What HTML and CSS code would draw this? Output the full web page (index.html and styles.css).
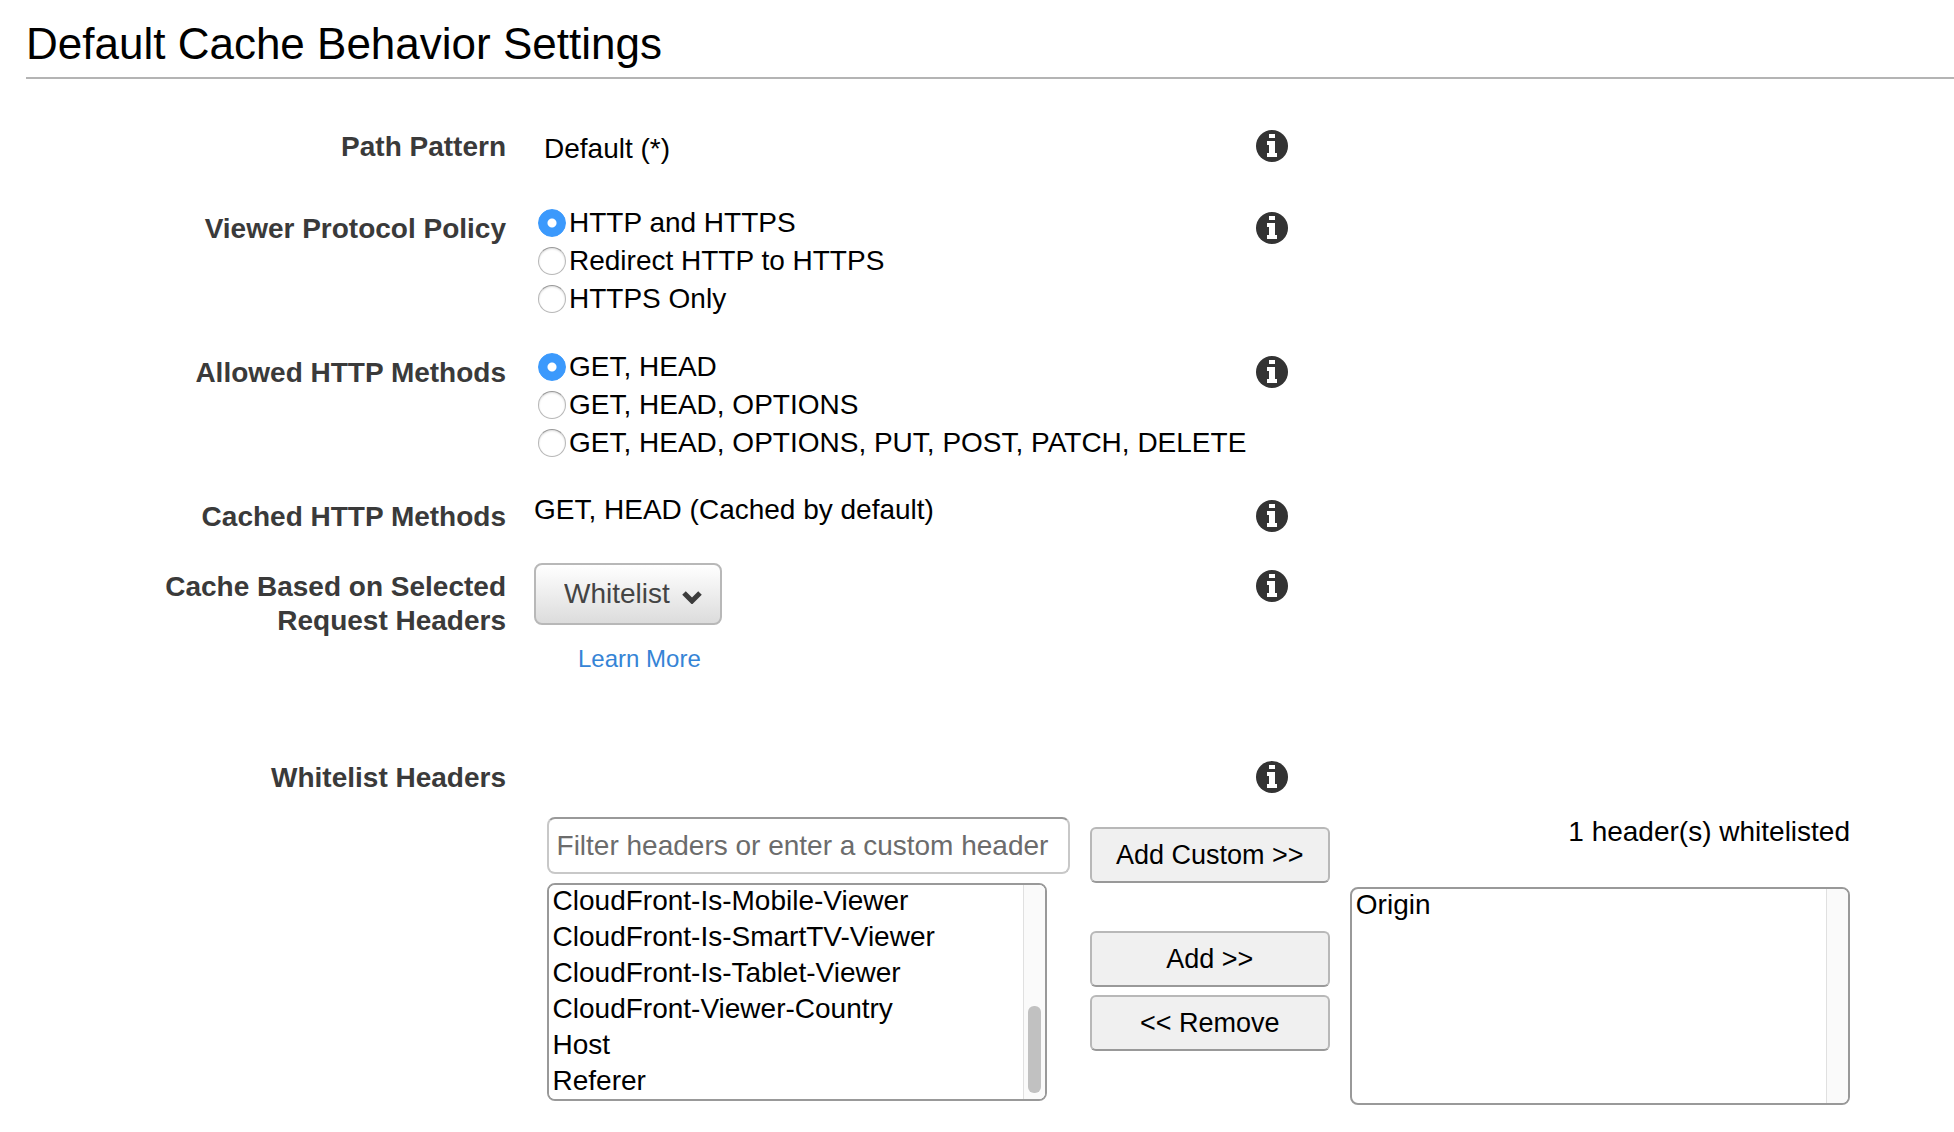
FILE: index.html
```html
<!DOCTYPE html>
<html lang="en">
<head>
<meta charset="utf-8">
<title>Default Cache Behavior Settings</title>
<link rel="stylesheet" href="styles.css">
</head>
<body>
<svg class="symbols" aria-hidden="true">
  <symbol id="info" viewBox="0 0 32 32">
    <circle cx="16" cy="16" r="16" fill="#333"/>
    <path fill="#fff" d="M13 4h6v4h-6zM11 11h8v12h2v4H11v-4h2v-8h-2z"/>
  </symbol>
</svg>
<main class="page">
  <h1 class="title">Default Cache Behavior Settings</h1>
  <form class="settings">
    <div class="row">
      <span class="label">Path Pattern</span>
      <p class="value value-inset">Default (*)</p>
      <button type="button" class="info" aria-label="About path pattern"><svg><use href="#info"/></svg></button>
    </div>
    <div class="row" role="radiogroup" aria-labelledby="viewer-policy">
      <span class="label" id="viewer-policy">Viewer Protocol Policy</span>
      <div class="choices">
        <label class="choice"><input type="radio" name="policy" checked>HTTP and HTTPS</label>
        <label class="choice"><input type="radio" name="policy">Redirect HTTP to HTTPS</label>
        <label class="choice"><input type="radio" name="policy">HTTPS Only</label>
      </div>
      <button type="button" class="info" aria-label="About viewer protocol policy"><svg><use href="#info"/></svg></button>
    </div>
    <div class="row" role="radiogroup" aria-labelledby="allowed-methods">
      <span class="label" id="allowed-methods">Allowed HTTP Methods</span>
      <div class="choices">
        <label class="choice"><input type="radio" name="methods" checked>GET, HEAD</label>
        <label class="choice"><input type="radio" name="methods">GET, HEAD, OPTIONS</label>
        <label class="choice"><input type="radio" name="methods">GET, HEAD, OPTIONS, PUT, POST, PATCH, DELETE</label>
      </div>
      <button type="button" class="info" aria-label="About allowed HTTP methods"><svg><use href="#info"/></svg></button>
    </div>
    <div class="row">
      <span class="label">Cached HTTP Methods</span>
      <p class="value">GET, HEAD (Cached by default)</p>
      <button type="button" class="info" aria-label="About cached HTTP methods"><svg><use href="#info"/></svg></button>
    </div>
    <div class="row row-spaced">
      <label class="label" for="cache-headers">Cache Based on Selected<br>Request Headers</label>
      <div class="dropdown-cell">
        <div class="dropdown">
          <select id="cache-headers">
            <option>None</option>
            <option selected>Whitelist</option>
            <option>All</option>
          </select>
          <svg class="chevron" viewBox="0 0 20 14" aria-hidden="true"><path d="M2 3l8 8 8-8" fill="none" stroke="#3c3c3c" stroke-width="5"/></svg>
        </div>
        <a class="learn" href="#learn-more">Learn More</a>
      </div>
      <button type="button" class="info" aria-label="About request header caching"><svg><use href="#info"/></svg></button>
    </div>
    <div class="row row-last">
      <label class="label" for="available">Whitelist Headers</label>
      <span></span>
      <button type="button" class="info" aria-label="About whitelist headers"><svg><use href="#info"/></svg></button>
    </div>
    <div class="picker">
      <div class="available">
        <input class="filter" type="text" placeholder="Filter headers or enter a custom header" aria-label="Filter headers or enter a custom header">
        <div class="list-box">
          <select class="list" id="available" size="6" multiple>
            <option>Accept</option>
            <option>Accept-Charset</option>
            <option>Accept-Datetime</option>
            <option>Accept-Encoding</option>
            <option>Accept-Language</option>
            <option>Authorization</option>
            <option>CloudFront-Forwarded-Proto</option>
            <option>CloudFront-Is-Desktop-Viewer</option>
            <option>CloudFront-Is-Mobile-Viewer</option>
            <option>CloudFront-Is-SmartTV-Viewer</option>
            <option>CloudFront-Is-Tablet-Viewer</option>
            <option>CloudFront-Viewer-Country</option>
            <option>Host</option>
            <option>Referer</option>
          </select>
          <div class="track"><div class="thumb"></div></div>
        </div>
      </div>
      <div class="actions">
        <button type="button" class="action action-custom">Add Custom &gt;&gt;</button>
        <button type="button" class="action">Add &gt;&gt;</button>
        <button type="button" class="action">&lt;&lt; Remove</button>
      </div>
      <div class="chosen">
        <label class="count" for="whitelisted">1 header(s) whitelisted</label>
        <div class="list-box">
          <select class="list" id="whitelisted" size="6" multiple>
            <option>Origin</option>
          </select>
          <div class="track"></div>
        </div>
      </div>
    </div>
  </form>
</main>
<script src="script.js"></script>
</body>
</html>
```
FILE: script.js
```js
// Start the list of available headers at its last six entries.
const available = document.getElementById("available");
const hidden = available.options.length - available.size;
available.scrollTop = hidden * available.options[0].offsetHeight;
```
FILE: styles.css
```css
* { box-sizing: border-box; }

body {
  margin: 0;
  background: #fff;
  color: #000;
  font: 28px/36px "Liberation Sans", Arial, Helvetica, sans-serif;
}

input, select, button { font: inherit; color: inherit; }

.symbols { display: none; }

.page { padding: 17px 0 24px 26px; }

.title {
  margin: 0 0 43px;
  padding-bottom: 6px;
  border-bottom: 2px solid #b4b4b4;
  font-size: 44px;
  line-height: 54px;
  font-weight: 400;
}

.row {
  display: grid;
  grid-template-columns: minmax(0, 480fr) minmax(0, 694fr) minmax(0, 698fr);
  column-gap: 28px;
  align-items: start;
  padding-bottom: 28px;
}

.row-spaced { padding-bottom: 76px; }
.row-last { padding-bottom: 22px; }

.label {
  padding-top: 8px;
  color: #3a3a3a;
  font-weight: 700;
  line-height: 34px;
  text-align: right;
}

.value { margin: 0; }
.value-inset { padding: 9px 10px; }

.choices { padding-bottom: 2px; }

.choice {
  display: flex;
  align-items: center;
  gap: 3px;
  padding-left: 4px;
  line-height: 38px;
  white-space: nowrap;
}

.choice input {
  appearance: none;
  flex: none;
  width: 28px;
  height: 28px;
  margin: 0;
  border: 1px solid #b8b8b8;
  border-top-color: #999;
  border-radius: 50%;
  background: #fff;
  box-shadow: inset 0 1px 2px #ddd;
}

.choice input:checked {
  border-color: #3b99fc;
  background: radial-gradient(circle, #fff 4px, #3b99fc 5px);
  box-shadow: none;
}

.info {
  width: 32px;
  height: 32px;
  margin-top: 8px;
  padding: 0;
  border: 0;
  background: none;
}

.info svg { display: block; width: 32px; height: 32px; }

.dropdown-cell {
  display: flex;
  flex-direction: column;
  align-items: flex-start;
  gap: 16px;
}

.dropdown {
  display: grid;
  align-items: center;
  margin-top: 1px;
}

.dropdown select {
  grid-area: 1 / 1;
  appearance: none;
  width: 188px;
  height: 62px;
  padding: 0 28px;
  border: 2px solid #b8b8b8;
  border-radius: 8px;
  background: linear-gradient(#fff, #dcdcdc);
  color: #444;
}

.chevron {
  grid-area: 1 / 1;
  justify-self: end;
  width: 20px;
  height: 14px;
  margin: 6px 20px 0 0;
  pointer-events: none;
}

.learn {
  padding-left: 44px;
  color: #3584d6;
  font-size: 24px;
  text-decoration: none;
}

.picker {
  display: grid;
  grid-template-columns: 523fr 240fr 500fr;
  column-gap: 20px;
  align-items: start;
  padding: 0 104px 0 27%;
}

.available {
  display: flex;
  flex-direction: column;
  align-items: flex-start;
  gap: 9px;
}

.filter {
  width: 100%;
  height: 57px;
  padding: 0 8px;
  border: 2px solid #c8c8c8;
  border-top-color: #999;
  border-radius: 8px;
}

.filter::placeholder { color: #6c6c6c; opacity: 1; }

.list-box {
  display: grid;
  width: 100%;
}

.available .list-box { width: 500px; max-width: 100%; }

.list {
  grid-area: 1 / 1;
  width: 100%;
  height: 218px;
  padding: 0;
  border: 2px solid #999;
  border-radius: 8px;
  background: #fff;
  overflow-y: scroll;
  scrollbar-width: none;
}

.list option {
  min-height: 36px;
  padding: 0 4px;
  line-height: 36px;
}

.track {
  grid-area: 1 / 1;
  z-index: 1;
  justify-self: end;
  display: flex;
  align-items: flex-end;
  width: 22px;
  margin: 2px;
  padding: 0 4px 6px;
  border-left: 1px solid #e0e0e0;
  border-radius: 0 6px 6px 0;
  background: #fafafa;
  pointer-events: none;
}

.thumb {
  width: 100%;
  height: 42%;
  border-radius: 6px;
  background: #c1c1c1;
}

.actions {
  display: flex;
  flex-direction: column;
  gap: 8px;
  padding-top: 10px;
}

.action {
  height: 56px;
  padding: 0;
  border: 2px solid #b8b8b8;
  border-bottom-color: #999;
  border-radius: 6px;
  background: #f0f0f0;
  font-size: 27px;
  white-space: nowrap;
}

.action-custom { margin-bottom: 40px; }

.chosen { display: grid; }

.count {
  padding-bottom: 40px;
  line-height: 30px;
  text-align: right;
}
```
